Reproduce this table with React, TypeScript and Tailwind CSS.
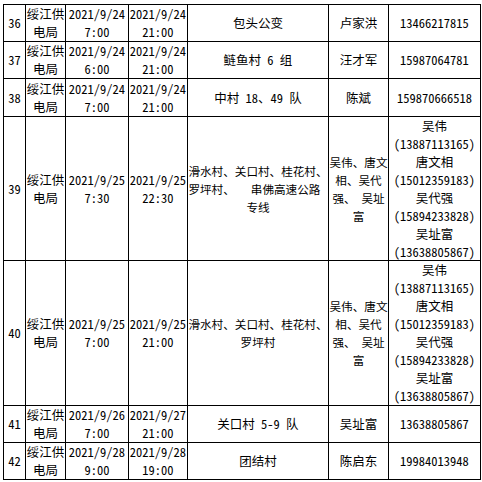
import React from "react";

type Row = {
  n: number;
  start: [string, string];
  end: [string, string];
  place: React.ReactNode;
  person: React.ReactNode;
  phone: React.ReactNode;
};

const contacts = (
  <>
    <div>吴伟</div>
    <div className="whitespace-nowrap">（13887113165）</div>
    <div>唐文相</div>
    <div className="whitespace-nowrap">（15012359183）</div>
    <div>吴代强</div>
    <div className="whitespace-nowrap">（15894233828）</div>
    <div>吴址富</div>
    <div className="whitespace-nowrap">（13638805867）</div>
  </>
);

const people = (
  <div className="text-[11.6px]">
    <div className="whitespace-nowrap">吴伟、唐文</div>
    <div className="whitespace-nowrap">相、吴代</div>
    <div className="whitespace-pre">强、 吴址</div>
    <div>富</div>
  </div>
);

const rows: Row[] = [
  { n: 36, start: ["2021/9/24", "7:00"], end: ["2021/9/24", "21:00"], place: "包头公变", person: "卢家洪", phone: "13466217815" },
  { n: 37, start: ["2021/9/24", "6:00"], end: ["2021/9/24", "21:00"], place: "鲢鱼村 6 组", person: "汪才军", phone: "15987064781" },
  { n: 38, start: ["2021/9/24", "7:00"], end: ["2021/9/24", "21:00"], place: "中村 18、49 队", person: "陈斌", phone: "159870666518" },
  {
    n: 39,
    start: ["2021/9/25", "7:30"],
    end: ["2021/9/25", "22:30"],
    place: (
      <div className="text-[11.6px]">
        <div className="whitespace-nowrap">滑水村、关口村、桂花村、</div>
        <div className="whitespace-nowrap flex items-center">
          <span>罗坪村、</span>
          <span className="inline-block w-[16px]" />
          <span>串佛高速公路</span>
        </div>
        <div>专线</div>
      </div>
    ),
    person: people,
    phone: contacts,
  },
  {
    n: 40,
    start: ["2021/9/25", "7:00"],
    end: ["2021/9/25", "21:00"],
    place: (
      <div className="text-[11.6px]">
        <div className="whitespace-nowrap">滑水村、关口村、桂花村、</div>
        <div>罗坪村</div>
      </div>
    ),
    person: people,
    phone: contacts,
  },
  { n: 41, start: ["2021/9/26", "7:00"], end: ["2021/9/27", "21:00"], place: "关口村 5-9 队", person: "吴址富", phone: "13638805867" },
  { n: 42, start: ["2021/9/28", "9:00"], end: ["2021/9/28", "19:00"], place: "团结村", person: "陈启东", phone: "19984013948" },
];

function Cell({ children }: { children: React.ReactNode }) {
  return <div className="bg-white flex flex-col items-center justify-center text-center overflow-hidden">{children}</div>;
}

export default function App() {
  return (
    <div className="w-[482px] h-[482px] bg-white pl-[3px] pt-[4px] text-black [font-family:'Noto_Sans_CJK_SC',sans-serif] [font-feature-settings:'hwid'] text-[12.5px] leading-[18px]">
      <div className="grid w-fit bg-black gap-px p-px grid-cols-[21px_39px_62px_58px_140px_59px_91px] grid-rows-[36px_36px_37px_143px_144px_36px_36px]">
        {rows.map((r) => (
          <React.Fragment key={r.n}>
            <Cell>{r.n}</Cell>
            <Cell>
              <div className="whitespace-nowrap">绥江供</div>
              <div>电局</div>
            </Cell>
            <Cell>
              <div className="whitespace-nowrap">{r.start[0]}</div>
              <div>{r.start[1]}</div>
            </Cell>
            <Cell>
              <div className="whitespace-nowrap">{r.end[0]}</div>
              <div>{r.end[1]}</div>
            </Cell>
            <Cell>{r.place}</Cell>
            <Cell>{r.person}</Cell>
            <Cell>{r.phone}</Cell>
          </React.Fragment>
        ))}
      </div>
    </div>
  );
}
